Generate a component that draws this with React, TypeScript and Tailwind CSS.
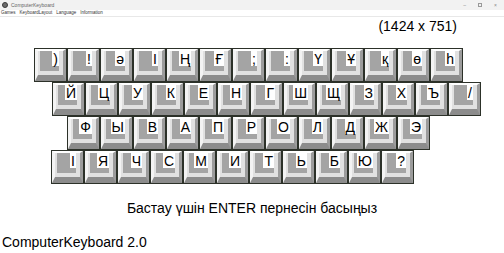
import React from "react";

const rows: { ml: string; keys: string[] }[] = [
  { ml: "ml-[34px]", keys: [")", "!", "ә", "І", "Ң", "Ғ", ";", ":", "Ү", "Ұ", "қ", "ө", "һ"] },
  { ml: "ml-[52px]", keys: ["Й", "Ц", "У", "К", "Е", "Н", "Г", "Ш", "Щ", "З", "Х", "Ъ", "/"] },
  { ml: "ml-[67px]", keys: ["Ф", "Ы", "В", "А", "П", "Р", "О", "Л", "Д", "Ж", "Э"] },
  { ml: "ml-[51px]", keys: ["І", "Я", "Ч", "С", "М", "И", "Т", "Ь", "Б", "Ю", "?"] },
];

function Key({ ch }: { ch: string }) {
  return (
    <div className="w-[33px] h-[34px] border border-[#2c3129] bg-[#2c3129] shrink-0">
      <div className="h-full w-full border-t-[2px] border-l-[3px] border-r-[3px] border-b-[6px] border-t-[#ffffff] border-l-[#f3f3f3] border-r-[#9c9c9c] border-b-[#8c8c8c] bg-[#e1e1e1]">
        <div className="ml-[2px] w-[19px] h-[20px] bg-[#a4a4a4] flex justify-end items-start">
          <div className="min-w-[6px] px-[1px] h-[15px] bg-white flex items-center justify-center text-[14px] leading-none text-black">
            {ch}
          </div>
        </div>
      </div>
    </div>
  );
}

export default function App() {
  return (
    <div
      className="w-[504px] h-[253px] bg-white overflow-hidden flex flex-col"
      style={{ fontFamily: '"Liberation Sans", Arial, sans-serif' }}
    >
      {/* Title bar */}
      <div className="h-[10px] bg-[#f2f2f2] flex items-center px-[2px] shrink-0">
        <div className="w-[6px] h-[6px] rounded-full bg-[#6b6b6b] border border-[#3a3a3a]" />
        <span className="ml-[3px] text-[5px] leading-none text-[#666]">ComputerKeyboard</span>
        <div className="ml-auto flex items-center gap-[12px] pr-[5px] text-[5px] leading-none text-[#888]">
          <span>–</span>
          <span className="w-[4px] h-[4px] border border-[#999]" />
          <span>×</span>
        </div>
      </div>
      {/* Menu bar */}
      <div className="h-[7px] bg-white border-b border-[#e8e8e8] flex items-center gap-[4px] px-[1px] text-[4.5px] leading-none text-[#333] shrink-0">
        <span>Games</span>
        <span>KeyboardLayout</span>
        <span>Language</span>
        <span>Information</span>
      </div>

      <div className="flex justify-end pr-[47px] mt-[1px]">
        <span className="text-[14px] leading-[16px] text-black">(1424 x 751)</span>
      </div>

      <div className="mt-[14px] flex flex-col">
        {rows.map((r, i) => (
          <div key={i} className={`flex ${r.ml}`}>
            {r.keys.map((k, j) => (
              <Key key={j} ch={k} />
            ))}
          </div>
        ))}
      </div>

      <div className="mt-[16px] text-center text-[14px] leading-[16px] text-black">
        Бастау үшін ENTER пернесін басыңыз
      </div>

      <div className="mt-[18px] pl-[2px] text-[14px] leading-[16px] text-black">
        ComputerKeyboard 2.0
      </div>
    </div>
  );
}
